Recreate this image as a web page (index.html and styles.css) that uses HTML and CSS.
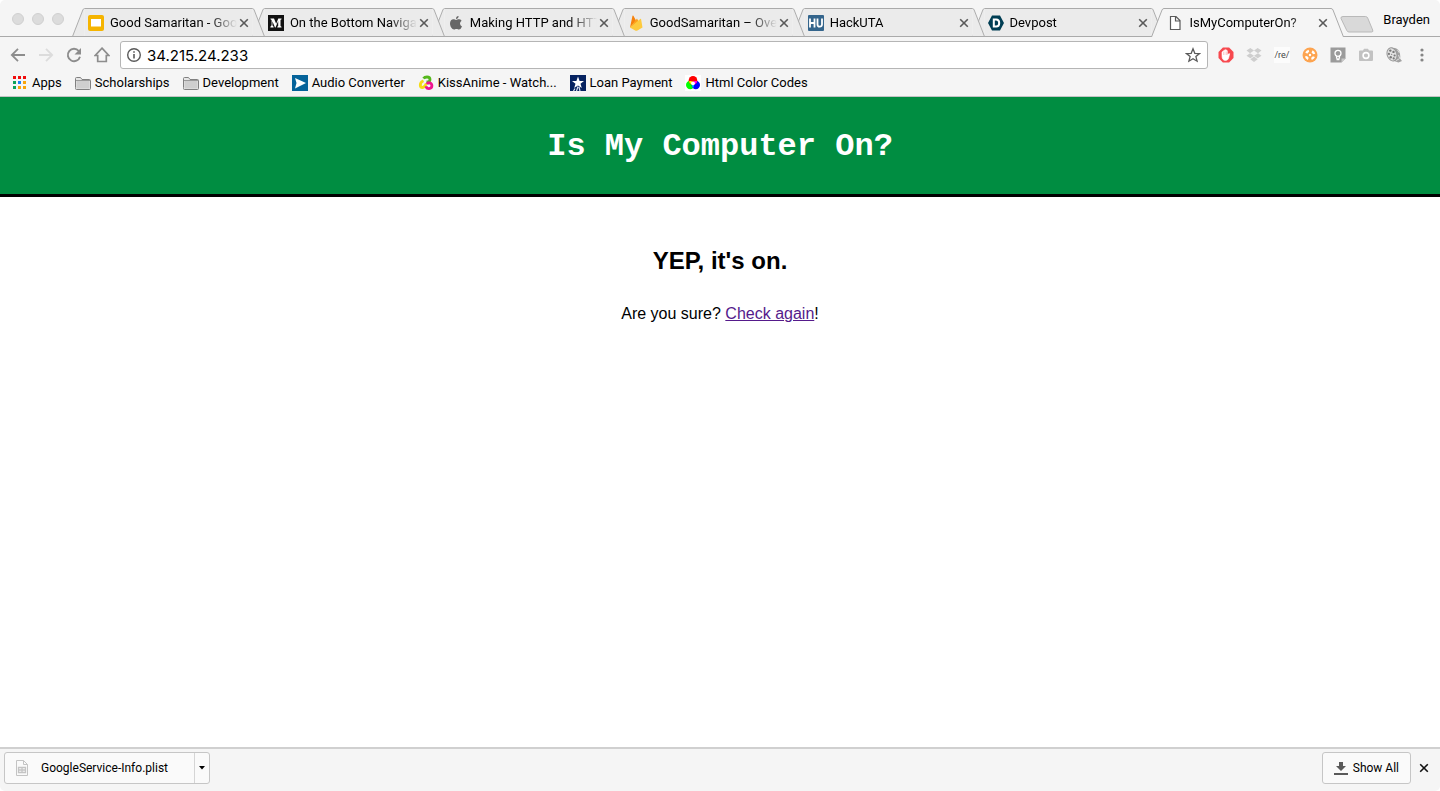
FILE: index.html
```
<!DOCTYPE html>
<html lang="en">
<head>
  <meta charset="UTF-8">
  <meta name="viewport" content="width=device-width, initial-scale=1.0">
  <title>IsMyComputerOn?</title>
  <link rel="stylesheet" href="styles.css">
</head>
<body>

  <!-- shared shapes -->
  <svg class="sprite" aria-hidden="true">
    <symbol id="edge-left" viewBox="0 0 13 29">
      <path class="edge-fill" d="M.5 29L11 2Q11.600 .5 13 .5V29z"/>
      <path class="edge-line" d="M.5 29L11 2Q11.600 .5 13 .5"/>
    </symbol>
    <symbol id="edge-right" viewBox="0 0 13 29">
      <path class="edge-fill" d="M12.500 29L2 2Q1.400 .5 0 .5V29z"/>
      <path class="edge-line" d="M12.500 29L2 2Q1.400 .5 0 .5"/>
    </symbol>
    <symbol id="close" viewBox="0 0 10 10">
      <path d="M1.200 1.200l7.600 7.600M8.800 1.200l-7.600 7.600" fill="none" stroke="currentColor" stroke-width="1.600"/>
    </symbol>
    <symbol id="folder" viewBox="0 0 16 16">
      <path d="M.5 12.500v-9q0-1 1-1h4l1.500 2h7.500q1 0 1 1v8q0 1-1 1h-13q-1 0-1-1z" fill="#e6e6e6" stroke="#808080"/>
      <path d="M1.500 6h13v7.500h-13z" fill="#cfcfcf"/>
      <path d="M1 5.500h14" stroke="#9a9a9a"/>
    </symbol>
  </svg>

  <div class="window">
    <div class="tab-strip">
      <div class="lights"><span></span><span></span><span></span></div>

      <div class="tabs">
        <div class="tab">
          <svg class="edge"><use href="#edge-left"/></svg>
          <div class="tab-body">
            <svg class="icon" viewBox="0 0 16 16"><rect width="16" height="16" rx="2" fill="#f5b400"/><rect x="3" y="4" width="10" height="7.500" fill="#fff"/></svg>
            <a class="tab-title" href="#">Good Samaritan - Goo</a>
            <button class="close" aria-label="Close tab"><svg><use href="#close"/></svg></button>
          </div>
          <svg class="edge"><use href="#edge-right"/></svg>
        </div>
        <div class="tab">
          <svg class="edge"><use href="#edge-left"/></svg>
          <div class="tab-body">
            <svg class="icon" viewBox="0 0 16 16"><rect width="16" height="16" fill="#111"/><path d="M2.500 3.500H6L8.200 8.700 10.300 3.500H13.500V4.200L12.500 5V11L13.500 11.800V12.500H9.300V11.800L10.200 11V6L7.500 12.500H7L4.400 6.300V10.300L5.600 11.800V12.500H2.400V11.800L3.600 10.300V5L2.500 4.200z" fill="#fff"/></svg>
            <a class="tab-title" href="#">On the Bottom Naviga</a>
            <button class="close" aria-label="Close tab"><svg><use href="#close"/></svg></button>
          </div>
          <svg class="edge"><use href="#edge-right"/></svg>
        </div>
        <div class="tab">
          <svg class="edge"><use href="#edge-left"/></svg>
          <div class="tab-body">
            <svg class="icon" viewBox="0 0 16 16"><path d="M8 5C9 5 9.600 4.300 11 4.300q1.600 0 2.600 1.400Q12 6.700 12 8.500q0 2 2 2.900Q12.700 14.500 11 14.500C10 14.500 9.700 14 8.500 14S7 14.500 6 14.500C4 14.500 2 11.300 2 8.500 2 5.800 3.600 4.300 5.400 4.300 6.500 4.300 7.300 5 8 5zM8 3.900Q8 1.300 10.600 1Q10.600 3.700 8 3.900z" fill="#666"/></svg>
            <a class="tab-title" href="#">Making HTTP and HTT</a>
            <button class="close" aria-label="Close tab"><svg><use href="#close"/></svg></button>
          </div>
          <svg class="edge"><use href="#edge-right"/></svg>
        </div>
        <div class="tab">
          <svg class="edge"><use href="#edge-left"/></svg>
          <div class="tab-body">
            <svg class="icon" viewBox="0 0 16 16"><path d="M2 12.500L4.500.8Q5 0 5.400.8L8 5.500z" fill="#f6820c"/><path d="M2 12.500L9 3.500 11.500 8z" fill="#fba21b"/><path d="M2 12.500L12.500 3.800Q13 3.500 13.100 4.200L14.500 12.500 9 15.700Q8.300 16 7.600 15.700z" fill="#fdca3d"/></svg>
            <a class="tab-title" href="#">GoodSamaritan – Over</a>
            <button class="close" aria-label="Close tab"><svg><use href="#close"/></svg></button>
          </div>
          <svg class="edge"><use href="#edge-right"/></svg>
        </div>
        <div class="tab">
          <svg class="edge"><use href="#edge-left"/></svg>
          <div class="tab-body">
            <svg class="icon" viewBox="0 0 16 16"><rect width="16" height="16" rx="1" fill="#34658c"/><path d="M2 3.500v9M6.500 3.500v9M2 8h4.500M9.500 3.500v6q0 2.200 2.200 2.200t2.300-2.200v-6" fill="none" stroke="#fff" stroke-width="1.800"/></svg>
            <a class="tab-title" href="#">HackUTA</a>
            <button class="close" aria-label="Close tab"><svg><use href="#close"/></svg></button>
          </div>
          <svg class="edge"><use href="#edge-right"/></svg>
        </div>
        <div class="tab">
          <svg class="edge"><use href="#edge-left"/></svg>
          <div class="tab-body">
            <svg class="icon" viewBox="0 0 16 16"><path d="M4 .5h8L16 8l-4 7.500H4L0 8z" fill="#003e54"/><path d="M5.800 4.500h2.400q3 0 3 3.500t-3 3.500H5.800z" fill="none" stroke="#fff" stroke-width="2"/></svg>
            <a class="tab-title" href="#">Devpost</a>
            <button class="close" aria-label="Close tab"><svg><use href="#close"/></svg></button>
          </div>
          <svg class="edge"><use href="#edge-right"/></svg>
        </div>
        <div class="tab active">
          <svg class="edge"><use href="#edge-left"/></svg>
          <div class="tab-body">
            <svg class="icon" viewBox="0 0 16 16"><path d="M3.500 1.500h5.500l4 4v9h-9.500zM8.500 1.500v4.500h4.500" fill="#fff" stroke="#5a5a5a" stroke-width="1.200"/></svg>
            <a class="tab-title" href="#">IsMyComputerOn?</a>
            <button class="close" aria-label="Close tab"><svg><use href="#close"/></svg></button>
          </div>
          <svg class="edge"><use href="#edge-right"/></svg>
        </div>
      </div>

      <button class="new-tab" aria-label="New tab">
        <svg viewBox="0 0 34 17"><path d="M3 .5h22.500q1.500 0 2.200 1.500l5 12q.8 2-1.200 2H9q-1.500 0-2.200-1.500L1 2.500Q.5.5 3 .5z" fill="#d9d9d9" stroke="#b9b9b9"/></svg>
      </button>
      <button class="profile">Brayden</button>
    </div>

    <div class="toolbar">
      <div class="nav">
        <button aria-label="Back"><svg viewBox="0 0 16 16"><path d="M15 8H2M8 1.800L1.800 8 8 14.200" fill="none" stroke="#8d8d8d" stroke-width="1.800"/></svg></button>
        <button aria-label="Forward" disabled><svg viewBox="0 0 16 16"><path d="M1 8h13M8 1.800L14.200 8 8 14.200" fill="none" stroke="#dcdcdc" stroke-width="1.800"/></svg></button>
        <button aria-label="Reload"><svg viewBox="0 0 16 16"><path d="M12.800 4A6.200 6.200 0 1 0 14 9.700" fill="none" stroke="#8d8d8d" stroke-width="1.900"/><path d="M15 1v6.500H8.500z" fill="#8d8d8d"/></svg></button>
        <button aria-label="Home"><svg viewBox="0 0 16 16"><path d="M8 1.200L14.800 8.500H12.300V14.500H3.700V8.500H1.200z" fill="none" stroke="#8d8d8d" stroke-width="1.700"/></svg></button>
      </div>

      <form class="omnibox">
        <svg class="icon" viewBox="0 0 16 16"><circle cx="8" cy="8" r="6.300" fill="none" stroke="#5a5a5a" stroke-width="1.400"/><path d="M8 7v4.500M8 4.200v1.600" stroke="#5a5a5a" stroke-width="1.600"/></svg>
        <input type="text" value="34.215.24.233" aria-label="Address">
        <button type="button" aria-label="Bookmark this page"><svg class="icon" viewBox="0 0 16 16"><path d="M8 1.800l1.800 4.500 4.700.3-3.600 3 1.200 4.600L8 11.700l-4.100 2.500 1.200-4.600-3.600-3 4.700-.3z" fill="none" stroke="#5a5a5a" stroke-width="1.300"/></svg></button>
      </form>

      <div class="extensions">
        <button aria-label="Ad blocker"><svg viewBox="0 0 16 16"><path d="M4.900.5h6.200l4.400 4.400v6.200l-4.400 4.400H4.900L.5 11.100V4.900z" fill="#f7484e"/><path d="M4 8.800V5q.6-1 1.200 0V4q.6-1.100 1.300 0V3q.7-1.200 1.400 0v.5q.7-1 1.400.2v4.500q1.400-2.200 2.400-1.400L10.500 11.500Q9.500 13.500 7.600 13.500 4 13.500 4 8.800z" fill="#fff" stroke="#fff" stroke-width=".6"/><path d="M5.500 5v3M7 4.500V8M8.500 4.500V8" stroke="#f9a5a7" stroke-width=".5"/></svg></button>
        <button aria-label="Dropbox"><svg viewBox="0 0 16 16"><path d="M4.300 1L8 3.600 4 6.200.5 3.500zM11.700 1L8 3.600l4 2.600 3.500-2.700zM.5 8.700L4 6.200l4 2.600-3.700 2.500zM15.500 8.700L12 6.200 8 8.800l3.700 2.500zM4.300 12.200L8 9.600l3.700 2.600L8 14.900z" fill="#cecece"/></svg></button>
        <button class="re" aria-label="Regex search"><span>/re/</span></button>
        <button aria-label="Lifebuoy"><svg viewBox="0 0 16 16"><circle cx="8" cy="8" r="7.500" fill="#fda450"/><circle cx="8" cy="8" r="4.200" fill="none" stroke="#fff" stroke-width="2.400" stroke-dasharray="3.300 3.300" stroke-dashoffset="-1.650"/><circle cx="8" cy="8" r="1.200" fill="#fff"/></svg></button>
        <button aria-label="Keep"><svg viewBox="0 0 16 16"><path d="M.5.5h15v11l-4 4H.5z" fill="#9b9b9b"/><path d="M15.500 11.500h-4v4z" fill="#c9c9c9"/><circle cx="8" cy="6.300" r="3" fill="none" stroke="#fff" stroke-width="1.300"/><path d="M6.500 9v2.300h3V9M6.500 12.600h3" fill="none" stroke="#fff" stroke-width="1.100"/></svg></button>
        <button aria-label="Screenshot"><svg viewBox="0 0 16 16"><path d="M2 3.500h3L6 1.800h4l1 1.700h3q1 0 1 1V13q0 1-1 1H2q-1 0-1-1V4.500q0-1 1-1z" fill="#c2c2c2"/><circle cx="8" cy="8.500" r="2.900" fill="none" stroke="#fff" stroke-width="1.600"/></svg></button>
        <button aria-label="Film reel"><svg viewBox="0 0 16 16"><path d="M5 .8q6-1 8.500 4 1.300 4.500.5 6.700l2 2.500-3.500 1.500L8 14z" fill="#a2a2a2"/><path d="M11.500 3l2 3M12.500 8l1.500 4M10 13.500l3-1.500" stroke="#dcdcdc"/><ellipse cx="6" cy="7.400" rx="4.800" ry="6.700" fill="#e2e2e2" stroke="#969696" transform="rotate(-18 6 7.400)"/><g fill="#7a7a7a"><circle cx="4.300" cy="3.600" r="1.200"/><circle cx="7.500" cy="4.900" r="1.200"/><circle cx="2.900" cy="6.900" r="1.100"/><circle cx="4.700" cy="10.200" r="1.200"/><circle cx="8.600" cy="8.500" r="1.100"/><circle cx="7.700" cy="11.400" r="1.100"/><circle cx="5.700" cy="7.300" r=".6"/></g></svg></button>
        <button aria-label="Menu"><svg viewBox="0 0 16 16"><g fill="#858585"><circle cx="8" cy="3" r="1.600"/><circle cx="8" cy="8" r="1.600"/><circle cx="8" cy="13" r="1.600"/></g></svg></button>
      </div>
    </div>

    <nav class="bookmarks">
      <a href="#"><svg class="icon" viewBox="0 0 16 16"><path d="M1 1h3v3H1zM6 1h3v3H6zM11 1h3v3h-3z" fill="#f00d0d"/><path d="M1 6h3v3H1zM1 11h3v3H1z" fill="#0da25a"/><path d="M6 6h3v3H6z" fill="#1a82f7"/><path d="M11 6h3v3h-3zM6 11h3v3H6zM11 11h3v3h-3z" fill="#f9a50b"/></svg>Apps</a>
      <a href="#"><svg class="icon"><use href="#folder"/></svg>Scholarships</a>
      <a href="#"><svg class="icon"><use href="#folder"/></svg>Development</a>
      <a href="#"><svg class="icon" viewBox="0 0 16 16"><rect width="16" height="16" fill="#05639a"/><path d="M3 3l11 5-11 5.500 1.500-5.500z" fill="#fff"/></svg>Audio Converter</a>
      <a href="#"><svg class="icon" viewBox="0 0 16 16"><g fill="none" stroke-width="2.800"><path d="M5.500 3.500Q6.500 2 9 2q3 0 3 2.400Q12 7 8.500 7" stroke="#55b81c"/><path d="M5.500 5.800Q2.300 7 2.300 10q0 2.500 2.200 2.500 2.300 0 3.800-4" stroke="#f5dc14"/><path d="M8.800 9q1-1.400 2.700-1.200 2.400.4 2.400 3t-2.900 2.800q-2.500 0-3-2.400" stroke="#ee1490"/></g></svg>KissAnime - Watch...</a>
      <a href="#"><svg class="icon" viewBox="0 0 16 16"><rect width="16" height="16" fill="#052260"/><path d="M8 1.500l1.600 4.400H14l-3.500 2.800 1.300 4.400L8 10.500l-3.800 2.600 1.300-4.400L2 5.900h4.400z" fill="#fff"/><path d="M5 13.500l-1.500 2.500M8 11.500L6.500 16M9 12l1 4" stroke="#dce3f0" stroke-width="1.200"/></svg>Loan Payment</a>
      <a href="#"><svg class="icon" viewBox="0 0 16 16"><rect width="16" height="16" fill="#fff"/><circle cx="5.200" cy="10" r="4.200" fill="#0f0"/><circle cx="10.800" cy="10" r="4.200" fill="#00f"/><circle cx="8" cy="5.400" r="4.300" fill="#f00"/><path d="M8 6.900A4.200 4.200 0 0 0 4 6.300Q4 8.800 6.700 9.500z" fill="#ff0"/><path d="M8 6.900A4.200 4.200 0 0 1 12 6.300Q12 8.800 9.300 9.500z" fill="#f0f"/><path d="M8 6.900Q6.300 8 8 13.200 9.700 8 8 6.900z" fill="#0ff"/><circle cx="8" cy="8.300" r="1.900" fill="#fff"/></svg>Html Color Codes</a>
    </nav>

    <main class="page">
      <header>
        <h1>Is My Computer On?</h1>
      </header>
      <h2>YEP, it's on.</h2>
      <p>Are you sure? <a href="#">Check again</a>!</p>
    </main>

    <footer class="downloads">
      <div class="download">
        <button class="download-file">
          <svg class="icon" viewBox="0 0 16 16"><path d="M2.500.5h7l4 4v11h-11zM9.500.5v4h4" fill="#fafafa" stroke="#c4c4c4"/><path d="M4.500 7.500h7v5h-7zM4.500 10h7M8 7.500v5" fill="none" stroke="#c4c4c4" stroke-width="1.300"/></svg>
          GoogleService-Info.plist
        </button>
        <button class="download-more" aria-label="Download options"><svg viewBox="0 0 6 4"><path d="M0 0h6L3 3.500z"/></svg></button>
      </div>
      <button class="show-all">
        <svg viewBox="0 0 14 14"><path d="M5 1h4v4h3L7 10 2 5h3zM0 12h14v2H0z" fill="#5a5a5a"/></svg>
        Show All
      </button>
      <button class="close close-bar" aria-label="Close downloads bar"><svg><use href="#close"/></svg></button>
    </footer>
  </div>

</body>
</html>
```
FILE: styles.css
```
* {
  box-sizing: border-box;
}

body {
  margin: 0;
  background: #fff;
  font-family: "Liberation Sans", Arial, sans-serif;
}

button {
  padding: 0;
  border: 0;
  background: none;
  font: inherit;
  color: inherit;
}

svg {
  display: block;
  flex: none;
}

.sprite {
  display: none;
}

.icon {
  width: 16px;
  height: 16px;
}

.window {
  display: flex;
  flex-direction: column;
  min-height: 100vh;
  border-radius: 5px;
  overflow: hidden;
}

.tab-strip,
.toolbar,
.bookmarks,
.downloads {
  font-family: Roboto, sans-serif;
  font-size: 13px;
  color: #000;
  background: #f5f5f5;
}

/* Tabs */
.tab-strip {
  display: flex;
  align-items: flex-end;
  height: 37px;
  padding: 0 10px 0 12px;
  border-bottom: 1px solid #aaa;
}

.lights {
  display: flex;
  gap: 8px;
  width: 60px;
  padding-bottom: 11px;
}

.lights span {
  width: 12px;
  height: 12px;
  border: 1px solid #d0d0d0;
  border-radius: 50%;
  background: #dcdcdc;
}

.tabs {
  display: flex;
  flex: 1;
  min-width: 0;
  margin-bottom: -1px;
}

.tab {
  display: flex;
  flex: 1;
  min-width: 0;
  height: 29px;
  padding-bottom: 1px;
}

.tab + .tab {
  margin-left: -13px;
}

.tab:nth-child(1) { z-index: 6; }
.tab:nth-child(2) { z-index: 5; }
.tab:nth-child(3) { z-index: 4; }
.tab:nth-child(4) { z-index: 3; }
.tab:nth-child(5) { z-index: 2; }
.tab:nth-child(6) { z-index: 1; }

.tab.active {
  z-index: 7;
  padding-bottom: 0;
}

.edge {
  width: 13px;
  height: 100%;
  fill: #ebebeb;
}

.edge-line {
  fill: none;
  stroke: #aaa;
}

.tab-body {
  display: flex;
  flex: 1;
  align-items: center;
  min-width: 0;
  padding-left: 3px;
  border-top: 1px solid #aaa;
  background: #ebebeb;
}

.active .edge {
  fill: #f5f5f5;
}

.active .tab-body {
  padding-bottom: 1px;
  background: #f5f5f5;
}

.tab-title {
  flex: 1;
  min-width: 0;
  margin: 0 2px 0 6px;
  overflow: hidden;
  white-space: nowrap;
  color: #000;
  text-decoration: none;
  mask-image: linear-gradient(to left, transparent, #000 28px);
}

.close {
  margin-right: 3px;
  color: #5a5a5a;
}

.close svg {
  width: 10px;
  height: 10px;
}

.new-tab {
  margin: 0 9px 3px -4px;
}

.new-tab svg {
  width: 34px;
  height: 17px;
}

.profile {
  padding-bottom: 9px;
}

/* Toolbar */
.toolbar {
  display: flex;
  align-items: center;
  padding: 4px 4px 3px;
}

.nav,
.extensions {
  display: flex;
}

.nav {
  padding-right: 4px;
}

.extensions {
  padding-left: 4px;
}

.nav button,
.extensions button {
  display: flex;
  align-items: center;
  justify-content: center;
  width: 28px;
  height: 28px;
}

.nav svg,
.extensions svg {
  width: 16px;
  height: 16px;
}

.extensions .re {
  font-size: 9px;
  color: #444;
}

.re span {
  width: 16px;
  line-height: 16px;
  background: #fcfcfc;
}

.omnibox {
  display: flex;
  flex: 1;
  align-items: center;
  height: 28px;
  padding: 0 6px 0 5px;
  border: 1px solid #b5b5b5;
  border-radius: 3px;
  background: #fff;
}

.omnibox input {
  flex: 1;
  min-width: 0;
  padding: 0 5px;
  border: 0;
  outline: 0;
  background: none;
  font-family: Inter, sans-serif;
  font-size: 15px;
  color: #000;
}

/* Bookmarks */
.bookmarks {
  display: flex;
  align-items: center;
  gap: 13px;
  height: 25px;
  padding: 0 12px 3px;
  border-bottom: 1px solid #c4c4c4;
}

.bookmarks a {
  display: flex;
  align-items: center;
  gap: 4px;
  white-space: nowrap;
  color: #000;
  text-decoration: none;
}

/* Page content */
.page {
  flex: 1;
  text-align: center;
}

.page header {
  padding: 31px 0 28px;
  border-bottom: 3px solid #000;
  background: #008d41;
}

.page h1 {
  margin: 0;
  font: bold 32px/38px "Liberation Mono", "Courier New", monospace;
  color: #fff;
}

.page h2 {
  margin: 50px 0 30px;
  font-size: 24px;
  line-height: 28px;
}

.page p {
  margin: 0;
  line-height: 18px;
}

.page p a {
  color: #551a8b;
}

/* Downloads bar */
.downloads {
  display: flex;
  align-items: center;
  height: 44px;
  padding: 0 11px 5px 4px;
  border-top: 2px solid #d0d0d0;
  font-size: 12px;
}

.download,
.show-all {
  display: flex;
  height: 32px;
  border: 1px solid #c6c6c6;
  border-radius: 3px;
  background: #fafafa;
}

.download {
  margin-right: auto;
}

.download-file {
  display: flex;
  align-items: center;
  gap: 11px;
  padding: 0 26px 0 9px;
}

.download-more {
  display: flex;
  align-items: center;
  padding: 0 4px;
  border-left: 1px solid #d5d5d5;
}

.download-more svg {
  width: 6px;
  height: 4px;
}

.show-all {
  align-items: center;
  gap: 5px;
  padding: 0 11px;
}

.show-all svg {
  width: 14px;
  height: 14px;
}

.close-bar {
  margin: 0 0 0 8px;
  color: #111;
}
```
